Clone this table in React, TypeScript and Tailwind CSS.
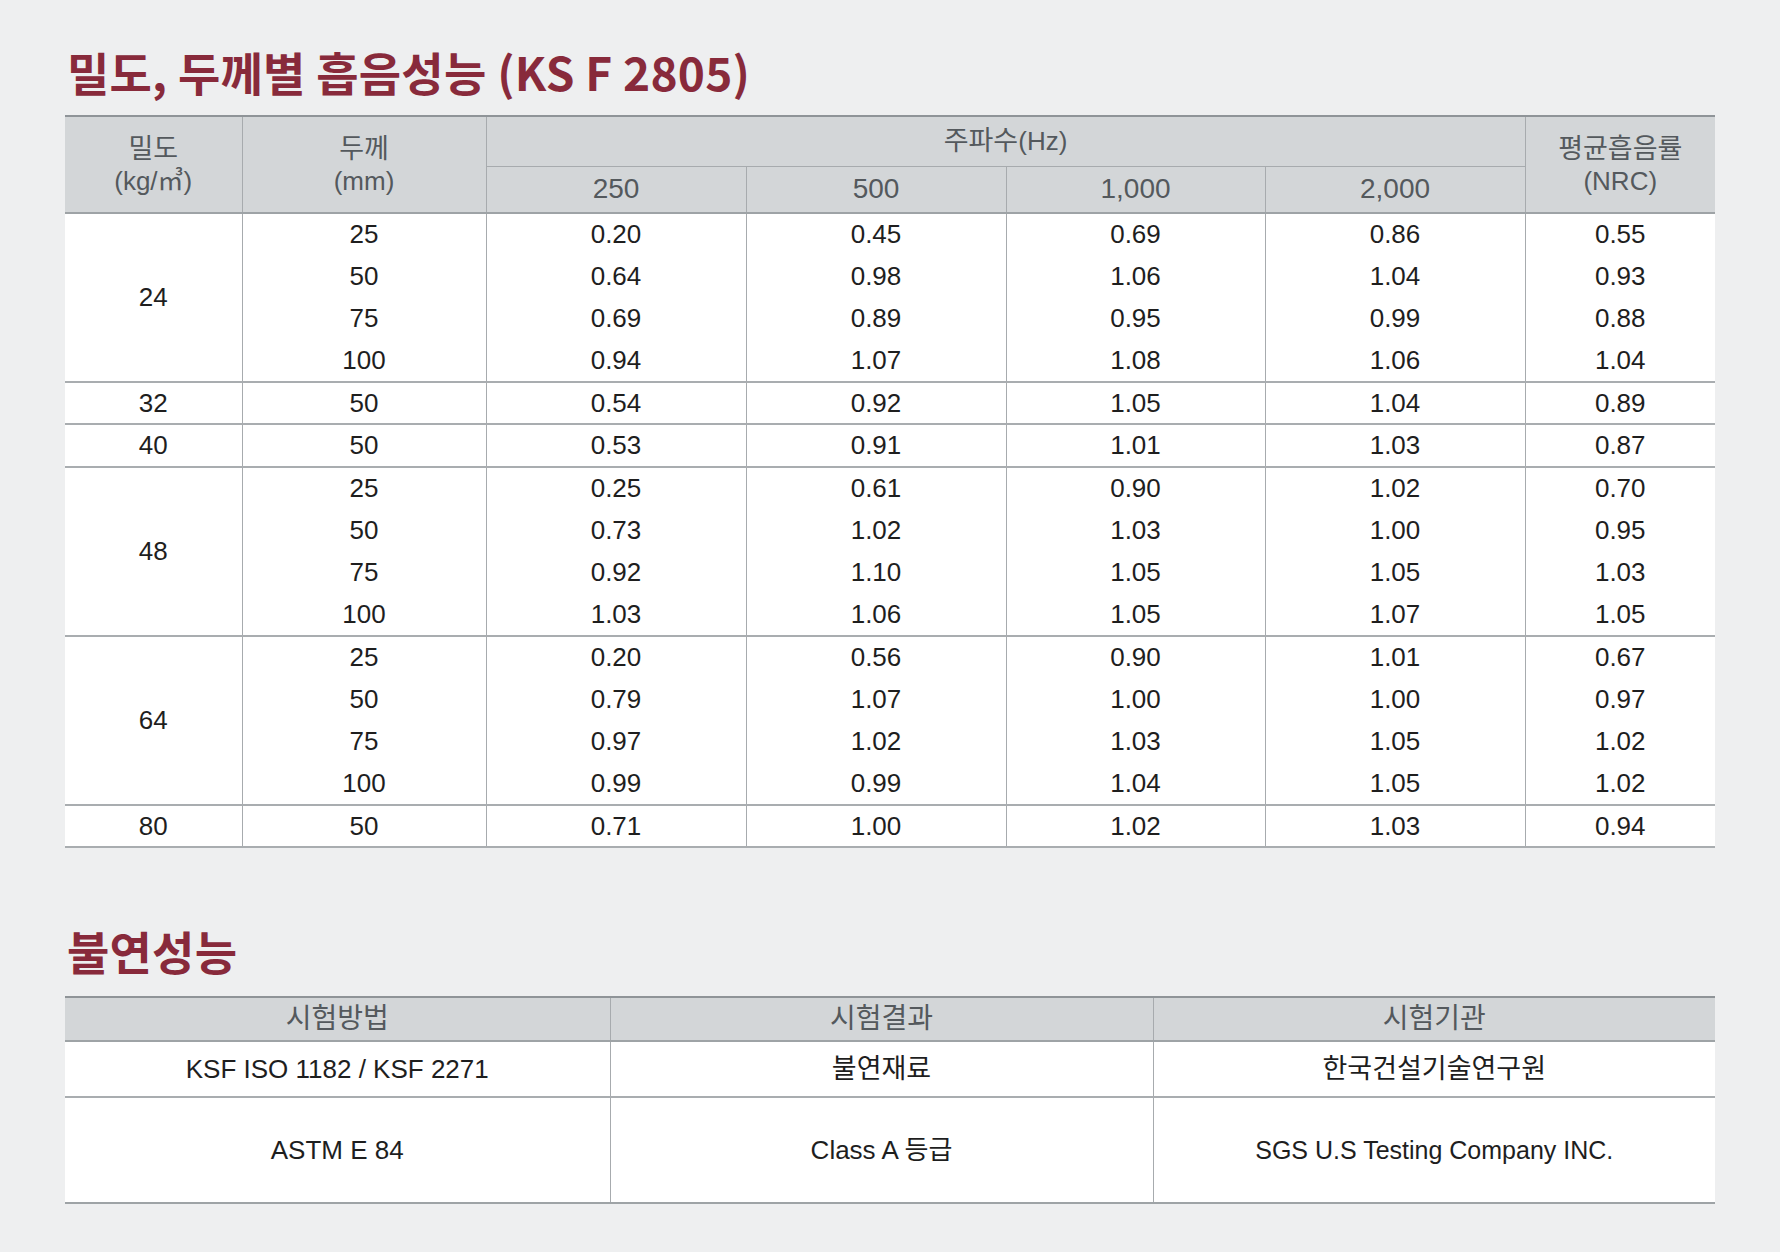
import React from 'react';

// ─── Data ─────────────────────────────────────────────────────────────────────

type Row = { t: string; v: string[] };
type Group = { density: string; rows: Row[] };

const GROUPS: Group[] = [
  {
    density: '24',
    rows: [
      { t: '25', v: ['0.20', '0.45', '0.69', '0.86', '0.55'] },
      { t: '50', v: ['0.64', '0.98', '1.06', '1.04', '0.93'] },
      { t: '75', v: ['0.69', '0.89', '0.95', '0.99', '0.88'] },
      { t: '100', v: ['0.94', '1.07', '1.08', '1.06', '1.04'] },
    ],
  },
  { density: '32', rows: [{ t: '50', v: ['0.54', '0.92', '1.05', '1.04', '0.89'] }] },
  { density: '40', rows: [{ t: '50', v: ['0.53', '0.91', '1.01', '1.03', '0.87'] }] },
  {
    density: '48',
    rows: [
      { t: '25', v: ['0.25', '0.61', '0.90', '1.02', '0.70'] },
      { t: '50', v: ['0.73', '1.02', '1.03', '1.00', '0.95'] },
      { t: '75', v: ['0.92', '1.10', '1.05', '1.05', '1.03'] },
      { t: '100', v: ['1.03', '1.06', '1.05', '1.07', '1.05'] },
    ],
  },
  {
    density: '64',
    rows: [
      { t: '25', v: ['0.20', '0.56', '0.90', '1.01', '0.67'] },
      { t: '50', v: ['0.79', '1.07', '1.00', '1.00', '0.97'] },
      { t: '75', v: ['0.97', '1.02', '1.03', '1.05', '1.02'] },
      { t: '100', v: ['0.99', '0.99', '1.04', '1.05', '1.02'] },
    ],
  },
  { density: '80', rows: [{ t: '50', v: ['0.71', '1.00', '1.02', '1.03', '0.94'] }] },
];

const FIRE_ROWS = [
  { method: 'KSF ISO 1182 / KSF 2271', result: '불연재료', org: '한국건설기술연구원', h: 'h-[56px]' },
  { method: 'ASTM E 84', result: 'Class A 등급', org: 'SGS U.S Testing Company INC.', h: 'h-[106px]' },
];

const titleCls =
  "font-['Noto_Sans_CJK_KR',sans-serif] font-bold text-[46px] leading-[54px] text-[#882a3b] tracking-[0.005em]";
const headCls = 'border-x border-[#a7abae] text-[#54595d] text-[26px] font-normal';
const cellCls = 'border-x border-[#a7abae] text-center';

// ─── Component ────────────────────────────────────────────────────────────────

export default function App() {
  return (
    <div className="min-h-[1252px] w-[1780px] bg-[#eeeff0] pl-[65px] pt-[44px] font-['Liberation_Sans','Noto_Sans_CJK_KR',sans-serif] text-[#1e1e1e]">
      <div className="w-[1650px]">
        {/* Sound absorption */}
        <h1 className={`${titleCls} pl-[2px]`}>밀도, 두께별 흡음성능 (KS F 2805)</h1>

        <table className="mt-[17px] w-full table-fixed border-collapse border-t-2 border-b-2 border-t-[#8f9498] border-b-[#9ea3a6] text-[26px]">
          <colgroup>
            <col className="w-[177px]" />
            <col className="w-[244px]" />
            <col className="w-[260px]" />
            <col className="w-[260px]" />
            <col className="w-[259px]" />
            <col className="w-[260px]" />
            <col className="w-[190px]" />
          </colgroup>
          <thead className="bg-[#d3d6d8]">
            <tr className="h-[50px]">
              <th rowSpan={2} className={`${headCls} border-l-0 leading-[32px]`}>
                <span className="text-[27px]">밀도</span>
                <br />
                (kg/㎥)
              </th>
              <th rowSpan={2} className={`${headCls} leading-[32px]`}>
                <span className="text-[27px]">두께</span>
                <br />
                (mm)
              </th>
              <th colSpan={4} className={`${headCls} border-b border-b-[#a7abae]`}>
                <span className="text-[27px]">주파수</span>(Hz)
              </th>
              <th rowSpan={2} className={`${headCls} border-r-0 leading-[32px]`}>
                <span className="text-[27px]">평균흡음률</span>
                <br />
                (NRC)
              </th>
            </tr>
            <tr className="h-[47px] border-b-2 border-[#9ea3a6]">
              {['250', '500', '1,000', '2,000'].map((f) => (
                <th key={f} className={`${headCls} text-[28px]`}>
                  {f}
                </th>
              ))}
            </tr>
          </thead>
          <tbody className="bg-white">
            {GROUPS.map((g) =>
              g.rows.map((r, i) => (
                <tr
                  key={g.density + r.t}
                  className={`h-[42.3px] ${i === g.rows.length - 1 ? 'border-b-2 border-[#a9adb0]' : ''}`}
                >
                  {i === 0 && (
                    <td rowSpan={g.rows.length} className={`${cellCls} border-l-0`}>
                      {g.density}
                    </td>
                  )}
                  <td className={cellCls}>{r.t}</td>
                  {r.v.map((v, j) => (
                    <td key={j} className={`${cellCls} ${j === 4 ? 'border-r-0' : ''}`}>
                      {v}
                    </td>
                  ))}
                </tr>
              ))
            )}
          </tbody>
        </table>

        {/* Fire resistance */}
        <h2 className={`${titleCls} mt-[75px] pl-[2px]`}>불연성능</h2>

        <table className="mt-[19px] w-full table-fixed border-collapse border-t-2 border-b-2 border-t-[#8f9498] border-b-[#9ea3a6] text-[26px]">
          <colgroup>
            <col className="w-[545px]" />
            <col className="w-[543px]" />
            <col className="w-[562px]" />
          </colgroup>
          <thead className="bg-[#d3d6d8]">
            <tr className="h-[43px] border-b-2 border-[#9ea3a6] text-[28px]">
              <th className={`${headCls} !text-[28px] border-l-0`}>시험방법</th>
              <th className={`${headCls} !text-[28px]`}>시험결과</th>
              <th className={`${headCls} !text-[28px] border-r-0`}>시험기관</th>
            </tr>
          </thead>
          <tbody className="bg-white">
            {FIRE_ROWS.map((r, i) => (
              <tr key={r.method} className={`${r.h} ${i === 0 ? 'border-b-2 border-[#a9adb0]' : ''}`}>
                <td className={`${cellCls} border-l-0`}>{r.method}</td>
                <td className={`${cellCls} ${i === 0 ? 'text-[27px]' : ''}`}>{r.result}</td>
                <td className={`${cellCls} border-r-0 ${i === 0 ? 'text-[27px]' : 'text-[25px]'}`}>{r.org}</td>
              </tr>
            ))}
          </tbody>
        </table>
      </div>
    </div>
  );
}
